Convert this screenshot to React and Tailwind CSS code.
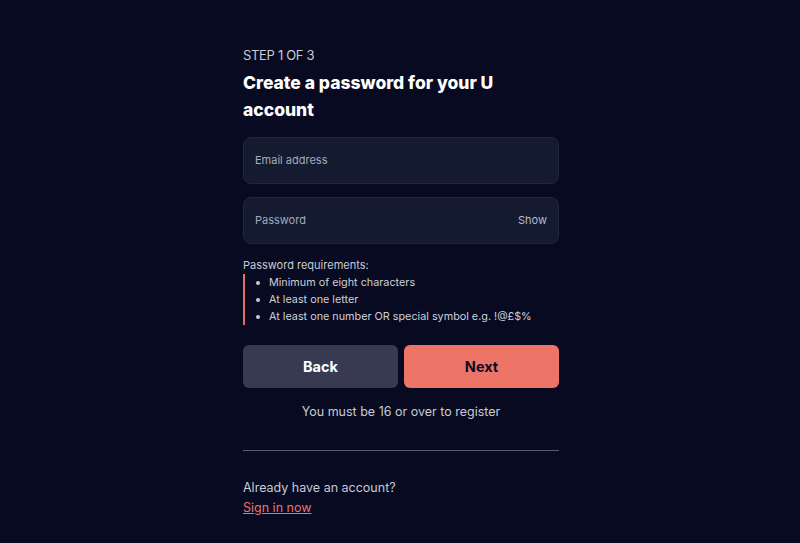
export default function App() {
  const reqs = [
    'Minimum of eight characters',
    'At least one letter',
    'At least one number OR special symbol e.g. !@£$%',
  ]

  return (
    <div className="min-h-[543px] w-full bg-[#070a20] flex justify-center" style={{ fontFamily: 'Inter, "Noto Sans", sans-serif' }}>
      <div className="w-[316px] ml-[2px] pt-[46px]">
        <div className="text-[13px] leading-[18px] text-[#c9cbd4] tracking-tight">STEP 1 OF 3</div>
        <h1 className="mt-[5px] text-[17.5px] leading-[27px] font-extrabold text-white w-[260px]">
          Create a password for your U account
        </h1>

        <div className="mt-[14px] h-[47px] rounded-lg bg-[#141a2f] border border-[#21273d] flex items-center px-[11px]">
          <span className="text-[11px] text-[#a7aab8]">Email address</span>
        </div>
        <div className="mt-[13px] h-[47px] rounded-lg bg-[#141a2f] border border-[#21273d] flex items-center justify-between px-[11px]">
          <span className="text-[11px] text-[#a7aab8]">Password</span>
          <span className="text-[11px] text-[#b9bbc6]">Show</span>
        </div>

        <div className="mt-[13px] text-[11px] leading-[16px] text-[#c9cbd4]">Password requirements:</div>
        <ul className="mt-[1px] border-l-2 border-[#e0716a] pl-[11px]">
          {reqs.map((r) => (
            <li key={r} className="flex items-center gap-[9px] text-[10.8px] leading-[17px] text-[#ced0d8]">
              <span className="w-[4px] h-[4px] rounded-full bg-[#c9cbd4]" />
              {r}
            </li>
          ))}
        </ul>

        <div className="mt-[20px] flex gap-[6px]">
          <button className="flex-1 h-[43px] rounded-md bg-[#373a50] text-white text-[14.5px] font-bold">Back</button>
          <button className="flex-1 h-[43px] rounded-md bg-[#ee7468] text-[#0b0d22] text-[14.5px] font-bold">Next</button>
        </div>

        <div className="mt-[15px] text-center text-[12.5px] leading-[18px] text-[#c9cbd4]">You must be 16 or over to register</div>

        <div className="mt-[29px] h-px bg-[#5a5c6a]" />

        <div className="mt-[27px] text-[12.5px] leading-[20px] text-[#c9cbd4]">Already have an account?</div>
        <a href="#" className="block text-[12.5px] leading-[20px] text-[#ee7468] underline">Sign in now</a>
      </div>
    </div>
  )
}
